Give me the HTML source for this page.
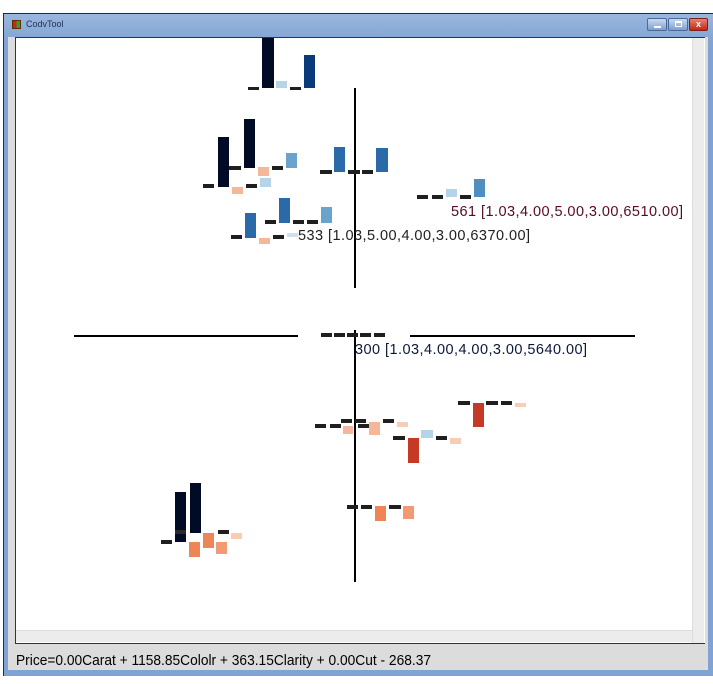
<!DOCTYPE html>
<html><head><meta charset="utf-8"><style>
*{margin:0;padding:0;box-sizing:border-box}
body{width:713px;height:684px;background:#fff;position:relative;overflow:hidden;font-family:"Liberation Sans",sans-serif}
.a{position:absolute}
</style></head><body>
<div class="a" style="left:3px;top:13px;width:710px;height:663px;background:linear-gradient(#9ab7de,#7fa3d3 30px,#7fa3d3);border-top:1px solid #1a2a40;border-left:1px solid #203040"></div>
<div class="a" style="left:8px;top:37px;width:700px;height:633px;background:#dcdcdc"></div>
<div class="a" style="left:12px;top:20px;width:9px;height:9px;background:linear-gradient(90deg,#d02020 50%,#30a030 50%);border:1px solid #603000"></div>
<div class="a" style="left:26px;top:19px;font-size:9px;color:#203050">CodvTool</div>
<div class="a" style="left:647px;top:18px;width:20px;height:13px;background:linear-gradient(#c8daf0,#7d9fd0);border:1px solid #4a6a9a;border-radius:2px"><div class="a" style="left:6px;top:7px;width:7px;height:2px;background:#fff"></div></div>
<div class="a" style="left:668px;top:18px;width:20px;height:13px;background:linear-gradient(#c8daf0,#7d9fd0);border:1px solid #4a6a9a;border-radius:2px"><div class="a" style="left:6px;top:2px;width:7px;height:6px;border:1px solid #fff;border-top-width:2px"></div></div>
<div class="a" style="left:689px;top:18px;width:19px;height:13px;background:linear-gradient(#e88070,#c02818);border:1px solid #802010;border-radius:2px;color:#fff;font-size:9px;font-weight:bold;text-align:center;line-height:11px">x</div>
<div class="a" style="left:15px;top:37px;width:690px;height:607px;border:1px solid #333;border-right:none;background:#fff"></div>
<div class="a" style="left:692px;top:38px;width:12px;height:605px;background:#ececec;border-left:1px solid #ddd"></div>
<div class="a" style="left:16px;top:630px;width:676px;height:12px;background:#ececec;border-top:1px solid #ddd"></div>
<svg class="a" style="left:0;top:0" width="713" height="684">
<text x="16" y="665" font-family="Liberation Sans, sans-serif" font-size="14.5" fill="#000" textLength="415" lengthAdjust="spacingAndGlyphs">Price=0.00Carat + 1158.85Cololr + 363.15Clarity + 0.00Cut - 268.37</text>
<g fill="#000">
<rect x="354" y="88" width="2" height="200"/>
<rect x="354" y="330" width="2" height="252"/>
<rect x="74" y="335" width="224" height="2"/>
<rect x="410" y="335" width="225" height="2"/>
</g>
<g fill="#1f1f1f">
<rect x="248" y="87" width="11" height="3"/><rect x="290" y="87" width="11" height="3"/>
<rect x="203" y="184" width="11" height="4"/><rect x="229" y="166" width="12" height="4"/><rect x="246" y="184" width="11" height="4"/><rect x="272" y="166" width="11" height="4"/>
<rect x="320" y="170" width="12" height="4"/><rect x="348" y="170" width="12" height="4"/><rect x="362" y="170" width="11" height="4"/>
<rect x="231" y="235" width="11" height="4"/><rect x="273" y="235" width="11" height="4"/><rect x="265" y="220" width="11" height="4"/><rect x="293" y="220" width="11" height="4"/><rect x="307" y="220" width="11" height="4"/>
<rect x="417" y="195" width="11" height="4"/><rect x="432" y="195" width="11" height="4"/><rect x="460" y="195" width="11" height="4"/>
<rect x="321" y="333" width="11" height="4"/><rect x="334" y="333" width="11" height="4"/><rect x="347" y="333" width="11" height="4"/><rect x="360" y="333" width="11" height="4"/><rect x="374" y="333" width="11" height="4"/>
<rect x="315" y="424" width="11" height="4"/><rect x="330" y="424" width="11" height="4"/><rect x="341" y="419" width="11" height="4"/><rect x="355" y="419" width="11" height="4"/><rect x="358" y="424" width="11" height="4"/><rect x="383" y="419" width="11" height="4"/>
<rect x="393" y="436" width="12" height="4"/><rect x="436" y="436" width="11" height="4"/>
<rect x="458" y="401" width="12" height="4"/><rect x="486" y="401" width="12" height="4"/><rect x="501" y="401" width="11" height="4"/>
<rect x="347" y="505" width="11" height="4"/><rect x="361" y="505" width="11" height="4"/><rect x="389" y="505" width="12" height="4"/>
<rect x="161" y="540" width="11" height="4"/><rect x="218" y="530" width="11" height="4"/>
</g>
<g fill="#020b26">
<rect x="262" y="38" width="12" height="50"/>
<rect x="218" y="137" width="11" height="50"/><rect x="244" y="119" width="11" height="49"/>
<rect x="175" y="492" width="11" height="50"/><rect x="190" y="483" width="11" height="50"/>
</g>
<rect x="175" y="530" width="11" height="4" fill="#2a2a2a"/>
<rect x="304" y="55" width="11" height="33" fill="#0b3a7a"/>
<g fill="#2a6aa8">
<rect x="334" y="147" width="11" height="25"/><rect x="376" y="148" width="12" height="24"/>
<rect x="245" y="213" width="11" height="25"/><rect x="279" y="198" width="11" height="25"/>
</g>
<g fill="#6aa4cc">
<rect x="286" y="153" width="11" height="15"/><rect x="321" y="207" width="11" height="16"/>
</g>
<rect x="474" y="179" width="11" height="18" fill="#4f8fc0"/>
<g fill="#b5d4e9">
<rect x="276" y="81" width="11" height="7"/><rect x="260" y="178" width="11" height="9"/><rect x="446" y="189" width="11" height="8"/><rect x="421" y="430" width="12" height="8"/>
</g>
<rect x="287" y="233" width="11" height="4" fill="#cfe1ee"/>
<g fill="#f4b898">
<rect x="232" y="187" width="11" height="7"/><rect x="258" y="167" width="11" height="9"/><rect x="259" y="238" width="11" height="6"/>
<rect x="343" y="426" width="10" height="8"/><rect x="369" y="422" width="11" height="13"/>
</g>
<g fill="#f7cdb5">
<rect x="397" y="422" width="11" height="5"/><rect x="450" y="438" width="11" height="6"/><rect x="515" y="403" width="11" height="4"/><rect x="231" y="533" width="11" height="6"/>
</g>
<g fill="#c53a24">
<rect x="408" y="438" width="11" height="25"/><rect x="473" y="403" width="11" height="24"/>
</g>
<g fill="#ef8459">
<rect x="375" y="506" width="11" height="15"/><rect x="189" y="542" width="11" height="15"/><rect x="203" y="533" width="11" height="15"/>
</g>
<g fill="#f29a74">
<rect x="403" y="506" width="11" height="13"/><rect x="216" y="542" width="11" height="12"/>
</g>
<g font-family="Liberation Sans, sans-serif" font-size="14.5">
<text x="298" y="240" fill="#202020" textLength="232">533 [1.03,5.00,4.00,3.00,6370.00]</text>
<text x="451" y="216" fill="#5a0a20" textLength="232">561 [1.03,4.00,5.00,3.00,6510.00]</text>
<text x="355" y="354" fill="#0a1838" textLength="232">300 [1.03,4.00,4.00,3.00,5640.00]</text>
</g>
</svg>
</body></html>
